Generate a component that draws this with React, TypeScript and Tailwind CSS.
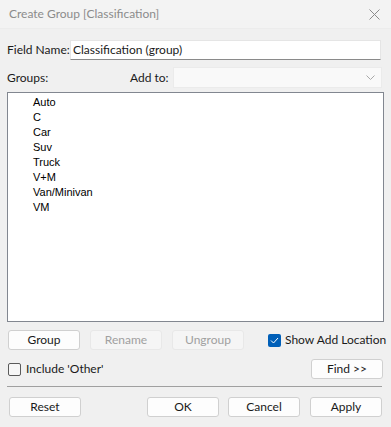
const ITEMS = ['Auto', 'C', 'Car', 'Suv', 'Truck', 'V+M', 'Van/Minivan', 'VM'];

const UI = "font-['Lato','Noto_Sans',sans-serif]";
const LIST = "font-['Liberation_Sans',Arial,sans-serif]";

function Btn({ label, disabled, className = '' }: { label: string; disabled?: boolean; className?: string }) {
  return (
    <div
      className={`h-[20px] w-[72px] shrink-0 flex items-center justify-center rounded-[3px] border text-[12px] leading-none whitespace-nowrap ${
        disabled
          ? 'border-[#e8e8e8] bg-[#f5f5f5] text-[#a0a0a0]'
          : 'border-[#d0d0d0] bg-[#fdfdfd] text-[#1a1a1a]'
      } ${className}`}
    >
      {label}
    </div>
  );
}

export default function App() {
  return (
    <div className={`w-[391px] h-[427px] bg-[#f0f0f0] overflow-hidden whitespace-nowrap ${UI}`}>
      {/* title bar */}
      <div className="h-[29px] flex items-center justify-between pl-[9px] pr-[11px] bg-[#f3f3f3] border-b border-[#ececec]">
        <span className="text-[12px] leading-none text-[#8b8b8b]">Create Group [Classification]</span>
        <svg width="11" height="11" viewBox="0 0 11 11" className="text-[#8b8b8b]">
          <path d="M0.5 0.5 L10.5 10.5 M10.5 0.5 L0.5 10.5" stroke="currentColor" strokeWidth="1" />
        </svg>
      </div>

      <div className="px-[7px]">
        {/* field name */}
        <div className="mt-[11px] flex items-center h-[20px]">
          <span className="w-[63px] text-[12px] leading-none text-[#1a1a1a]">Field Name:</span>
          <div className="flex-1 h-[20px] bg-white border border-[#e5e5e5] border-b-[#8a8a8a] flex items-center pl-[2px] text-[12px] leading-none text-[#1a1a1a] mr-[3px]">
            Classification (group)
          </div>
        </div>

        {/* groups / add to */}
        <div className="mt-[7px] flex items-center h-[21px]">
          <span className="w-[123px] text-[12px] leading-none text-[#1a1a1a]">Groups:</span>
          <span className="w-[43px] text-[12px] leading-none text-[#1a1a1a]">Add to:</span>
          <div className="flex-1 h-[21px] bg-[#f9f9f9] border border-[#ebebeb] flex items-center justify-end pr-[6px] mr-[2px]">
            <svg width="9" height="5" viewBox="0 0 9 5">
              <path d="M0.5 0.5 L4.5 4.5 L8.5 0.5" stroke="#a8a8a8" fill="none" strokeWidth="1" />
            </svg>
          </div>
        </div>

        {/* list */}
        <div className={`mt-[4px] h-[230px] bg-white border border-[#828790] pt-[2px] pl-[25px] ${LIST}`}>
          {ITEMS.map((it) => (
            <div key={it} className="h-[15px] leading-[15px] text-[11px] text-black">
              {it}
            </div>
          ))}
        </div>

        {/* action buttons */}
        <div className="mt-[8px] flex items-center h-[20px]">
          <Btn label="Group" className="ml-[1px]" />
          <Btn label="Rename" disabled className="ml-[10px]" />
          <Btn label="Ungroup" disabled className="ml-[10px]" />
          <div className="ml-[24px] flex items-center gap-[4px]">
            <div className="w-[13px] h-[13px] rounded-[2px] bg-[#005fb8] flex items-center justify-center">
              <svg width="9" height="7" viewBox="0 0 9 7">
                <path d="M1 3.5 L3.5 6 L8 1" stroke="white" fill="none" strokeWidth="1" />
              </svg>
            </div>
            <span className="text-[12px] leading-none text-[#1a1a1a]">Show Add Location</span>
          </div>
        </div>

        {/* include other / find */}
        <div className="mt-[9px] flex items-center justify-between h-[20px]">
          <div className="flex items-center gap-[5px] ml-[1px]">
            <div className="w-[13px] h-[13px] rounded-[2px] border border-[#5a5a5a] bg-[#f7f7f7]" />
            <span className="text-[12px] leading-none text-[#1a1a1a]">Include 'Other'</span>
          </div>
          <Btn label="Find >>" className="mr-[1px]" />
        </div>

        <div className="mt-[7px] h-px bg-[#a0a0a0] mr-[2px]" />

        {/* dialog buttons */}
        <div className="mt-[10px] flex items-center h-[20px]">
          <Btn label="Reset" className="ml-[2px]" />
          <Btn label="OK" className="ml-[66px]" />
          <Btn label="Cancel" className="ml-[9px]" />
          <Btn label="Apply" className="ml-[10px]" />
        </div>
      </div>
    </div>
  );
}
